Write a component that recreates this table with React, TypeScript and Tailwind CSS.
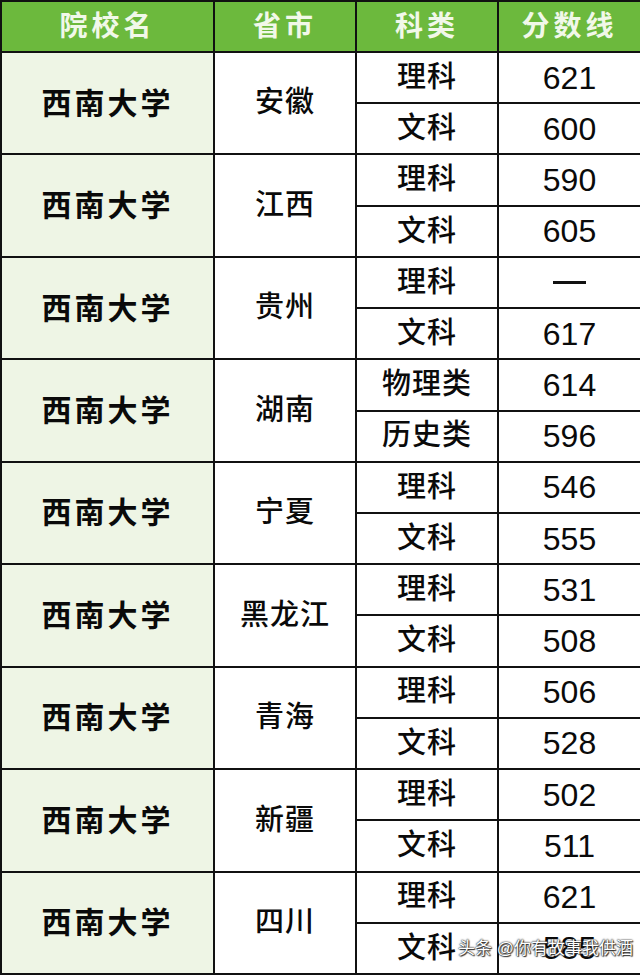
const groups = [
  { prov: "安徽", rows: [["理科", "621"], ["文科", "600"]] },
  { prov: "江西", rows: [["理科", "590"], ["文科", "605"]] },
  { prov: "贵州", rows: [["理科", "—"], ["文科", "617"]] },
  { prov: "湖南", rows: [["物理类", "614"], ["历史类", "596"]] },
  { prov: "宁夏", rows: [["理科", "546"], ["文科", "555"]] },
  { prov: "黑龙江", rows: [["理科", "531"], ["文科", "508"]] },
  { prov: "青海", rows: [["理科", "506"], ["文科", "528"]] },
  { prov: "新疆", rows: [["理科", "502"], ["文科", "511"]] },
  { prov: "四川", rows: [["理科", "621"], ["文科", "585"]] },
]

const font = { fontFamily: '"Liberation Sans", "Noto Sans CJK SC", sans-serif' }

export default function App() {
  return (
    <div className="relative h-[975px] w-[640px] overflow-hidden bg-white" style={font}>
      <table className="h-[975px] w-[640px] table-fixed border-collapse border-2 border-[#111]">
        <colgroup>
          <col className="w-[213px]" />
          <col className="w-[142px]" />
          <col className="w-[142px]" />
          <col className="w-[143px]" />
        </colgroup>
        <thead>
          <tr className="h-[51px] bg-[#6cb93d] text-[28px] font-bold tracking-[4px] text-[#f1f8e9]">
            <th className="border-2 border-[#111]">院校名</th>
            <th className="border-2 border-[#111]">省市</th>
            <th className="border-2 border-[#111]">科类</th>
            <th className="border-2 border-[#111]">分数线</th>
          </tr>
        </thead>
        <tbody className="text-[#0a0a0a]">
          {groups.map((g) =>
            g.rows.map((r, i) => (
              <tr key={g.prov + i} className="h-[51.2px]">
                {i === 0 && (
                  <>
                    <td rowSpan={2} className="border-2 border-[#111] bg-[#eef5e5] text-center text-[30px] font-bold tracking-[3px]">
                      西南大学
                    </td>
                    <td rowSpan={2} className="border-2 border-[#111] text-center text-[29px] font-medium tracking-[1px]">
                      {g.prov}
                    </td>
                  </>
                )}
                <td className="border-2 border-[#111] text-center text-[29px] font-medium tracking-[1px]">{r[0]}</td>
                <td className="border-2 border-[#111] text-center text-[32px]">
                  {r[1] === "—" ? <span className="inline-block h-[3px] w-[33px] translate-y-[-9px] bg-[#111]" /> : r[1]}
                </td>
              </tr>
            ))
          )}
        </tbody>
      </table>
      <div
        className="absolute left-[458px] top-[936px] text-[17px] text-white"
        style={{ textShadow: "0 0 1px #222, 0 0 2px #222, 1px 1px 1px #333" }}
      >
        头条 @你有故事我供酒
      </div>
    </div>
  )
}
